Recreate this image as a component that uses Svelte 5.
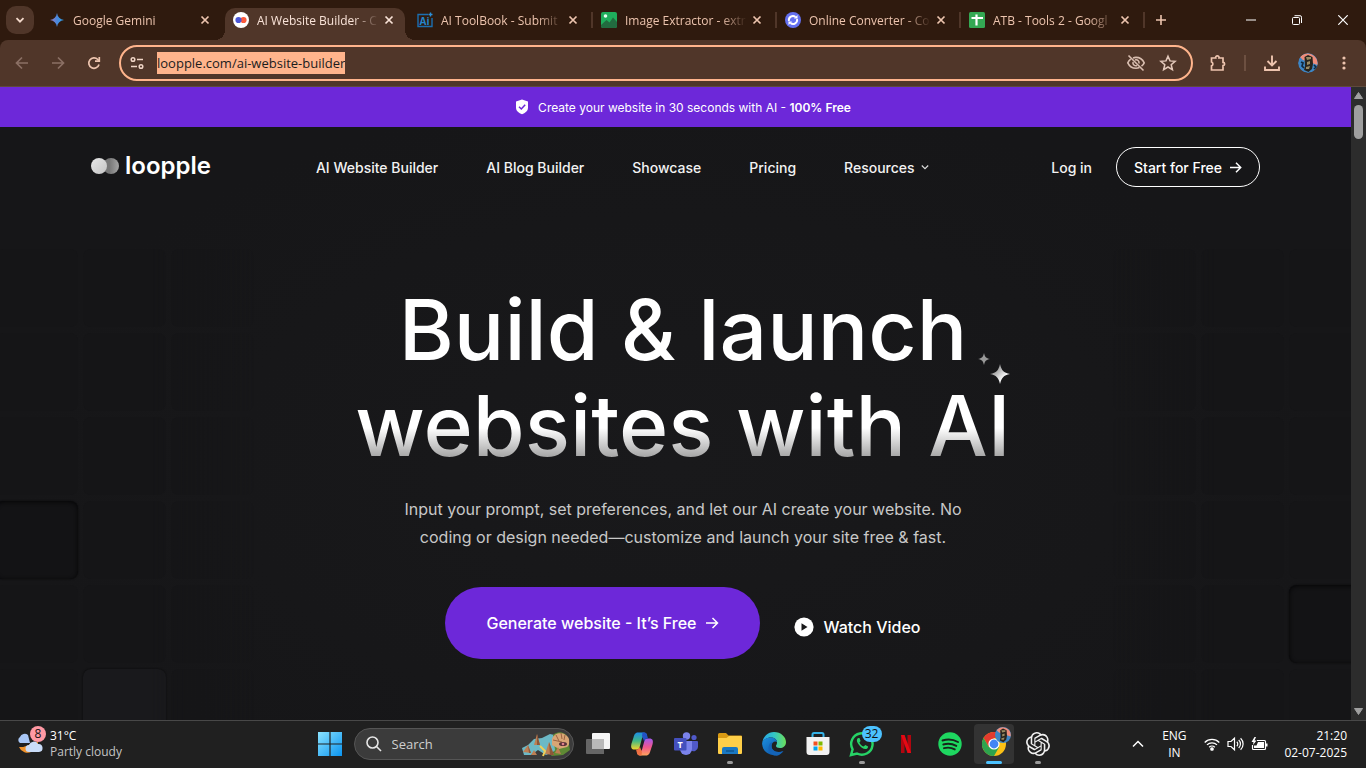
<script>
    const tabs = [
        { title: 'Google Gemini', icon: 'gemini' },
        { title: 'AI Website Builder - C', icon: 'loopple', active: true },
        { title: 'AI ToolBook - Submit', icon: 'toolbook' },
        { title: 'Image Extractor - extr', icon: 'image' },
        { title: 'Online Converter - Co', icon: 'converter' },
        { title: 'ATB - Tools 2 - Googl', icon: 'sheets' }
    ]

    const links = ['AI Website Builder', 'AI Blog Builder', 'Showcase', 'Pricing']

    const apps = [
        { name: 'Task View' },
        { name: 'Copilot' },
        { name: 'Teams' },
        { name: 'File Explorer', running: true },
        { name: 'Edge' },
        { name: 'Store' },
        { name: 'WhatsApp', running: true, badge: 32 },
        { name: 'Netflix' },
        { name: 'Spotify' },
        { name: 'Chrome', running: true, focused: true },
        { name: 'ChatGPT', running: true }
    ]

    // background tiles, six rows of three on each side
    const tiles = Array.from({ length: 18 }, (_, i) => i)

    let url = 'loopple.com/ai-website-builder'
    let query = ''
</script>

<div class="desktop">
    <header class="tabStrip">
        <button class="tabSearch" aria-label="Search tabs">
            <svg width="10" height="10" viewBox="0 0 10 10"><path d="M1.5 3.2 5 6.7l3.5-3.5" fill="none" stroke="#f3d9cb" stroke-width="1.8" /></svg>
        </button>

        <div class="tabs">
            {#each tabs as tab}
                <div class="tab" class:active={tab.active}>
                    <svg class="favicon" width="16" height="16" viewBox="0 0 16 16">
                        {#if tab.icon === 'gemini'}
                            <defs>
                                <linearGradient id="gem" x1="0" x2="1"><stop offset="0.1" stop-color="#8f7cc4" /><stop offset="0.5" stop-color="#4a87dc" /><stop offset="1" stop-color="#2aa3e8" /></linearGradient>
                            </defs>
                            <path d="M8 1c.6 4 3 6.400 7 7-4 .6-6.400 3-7 7-.6-4-3-6.400-7-7 4-.6 6.400-3 7-7z" fill="url(#gem)" />
                        {:else if tab.icon === 'loopple'}
                            <circle cx="8" cy="8" r="8" fill="#fff" />
                            <circle cx="10.500" cy="8" r="3.100" fill="#fb5a3c" />
                            <circle cx="5.500" cy="8" r="3.100" fill="#4b57d6" />
                        {:else if tab.icon === 'toolbook'}
                            <path d="M11 2.500H1v12h14V6" fill="none" stroke="#1c6fb0" stroke-width="1.400" />
                            <path d="M13.500.5v4M11.500 2.500h4" stroke="#2a8fd8" stroke-width="1.400" />
                            <text x="2.500" y="12.500" font-size="10" font-weight="700" fill="#2585ca">Ai</text>
                        {:else if tab.icon === 'image'}
                            <rect width="16" height="16" rx="2" fill="#1fae5c" />
                            <path d="M0 13l5.500-5 3 2.500L12 5.500l4 4.500v4a2 2 0 0 1-2 2H2a2 2 0 0 1-2-2z" fill="#226b3f" />
                            <circle cx="4.500" cy="4" r="1.800" fill="#e8fff0" />
                        {:else if tab.icon === 'converter'}
                            <circle cx="8" cy="8" r="8" fill="#6470f0" />
                            <path d="M4 9a4 4 0 0 1 6.500-4M12 7a4 4 0 0 1-6.500 4" fill="none" stroke="#fff" stroke-width="1.900" />
                            <path d="M9 6.500h3.500V3zM7 9.500H3.500V13z" fill="#fff" />
                        {:else}
                            <rect width="16" height="16" rx="1.500" fill="#34a853" />
                            <path d="M7.500 2.500v11M2.500 6h11.500" stroke="#fff" stroke-width="2.200" />
                        {/if}
                    </svg>
                    <span class="tabTitle">{tab.title}</span>
                    <button class="closeTab" aria-label="Close tab">
                        <svg width="10" height="10" viewBox="0 0 10 10"><path d="M1.500 1.500l7 7M8.500 1.500l-7 7" stroke="currentColor" stroke-width="1.700" /></svg>
                    </button>
                </div>
            {/each}
        </div>

        <button class="newTab" aria-label="New tab">
            <svg width="12" height="12" viewBox="0 0 12 12"><path d="M6 1v10M1 6h10" stroke="#edc4ae" stroke-width="1.600" /></svg>
        </button>

        <div class="windowButtons">
            <button aria-label="Minimize"><svg width="10" height="10" viewBox="0 0 10 10"><path d="M0 5h10" stroke="#fff" /></svg></button>
            <button aria-label="Restore"><svg width="10" height="10" viewBox="0 0 10 10" fill="none" stroke="#fff"><rect x=".5" y="2.500" width="7" height="7" rx="1" /><path d="M2.500.7H8A1.500 1.500 0 0 1 9.500 2.200V8" /></svg></button>
            <button aria-label="Close"><svg width="10" height="10" viewBox="0 0 10 10"><path d="M.3.3l9.400 9.400M9.700.3.3 9.700" stroke="#fff" stroke-width="1.200" /></svg></button>
        </div>
    </header>

    <div class="toolbarBack">
        <div class="toolbar">
            <button class="tool dim" aria-label="Back"><svg width="16" height="16" viewBox="0 0 16 16"><path d="M14 8H3M8 2.500 2.500 8 8 13.500" /></svg></button>
            <button class="tool dim" aria-label="Forward"><svg width="16" height="16" viewBox="0 0 16 16"><path d="M2 8h11M8 2.500 13.500 8 8 13.500" /></svg></button>
            <button class="tool" aria-label="Reload"><svg width="16" height="16" viewBox="0 0 16 16"><path d="M13 9.500A5.200 5.200 0 1 1 11.800 4.500L13 5.700" /><path d="M13.300 2v4.200H9" /></svg></button>

            <div class="omnibox">
                <svg width="16" height="16" viewBox="0 0 16 16" fill="none" stroke="#f0d5c6" stroke-width="1.500"><circle cx="4" cy="4.500" r="1.800" /><path d="M8 4.500h6M2 11.500h6" /><circle cx="12" cy="11.500" r="1.800" /></svg>
                <input class="url" type="text" aria-label="Address" bind:value={url} />
                <div class="omniboxIcons">
                    <button aria-label="Third-party cookies blocked">
                        <svg width="20" height="20" viewBox="0 0 20 20" fill="none" stroke="#d9beb0" stroke-width="1.600"><path d="M7 4.900A8.500 8.500 0 0 1 10 4.400c3.700 0 6.600 2 8.200 5.400a9.500 9.500 0 0 1-2.700 3.400M13.500 14.500a9 9 0 0 1-3.500.7c-3.700 0-6.600-2-8.200-5.400A9.500 9.500 0 0 1 4.700 6.200" /><path d="M9 6.900a3 3 0 0 1 3.900 3.700M11 12.600a3 3 0 0 1-3.900-3.700M2.500 2.500l15 15" /></svg>
                    </button>
                    <button aria-label="Bookmark">
                        <svg width="18" height="18" viewBox="0 0 18 18"><path d="M9 2.200l2 4.700 5.100.4-3.900 3.400 1.200 5L9 13l-4.400 2.700 1.200-5-3.900-3.400 5.100-.4z" fill="none" stroke="#e3c8ba" stroke-width="1.500" /></svg>
                    </button>
                </div>
            </div>

            <div class="extras">
                <button class="tool" aria-label="Extensions"><svg width="18" height="18" viewBox="0 0 18 18"><path d="M2.500 4h4.200a1.700 1.700 0 1 1 3.300 0H14v4.300a1.600 1.600 0 1 1 0 3.200V16H2.500v-4.200a2 2 0 0 0 0-3.800z" /></svg></button>
                <span class="divider"></span>
                <button class="tool" aria-label="Downloads"><svg width="18" height="18" viewBox="0 0 18 18"><path d="M9 1.500v9.500M4.500 7 9 11.500 13.500 7M2 12.500V16h14v-3.500" stroke-width="1.900" /></svg></button>
                <button class="tool" aria-label="Profile">
                    <svg class="avatar" width="20" height="20" viewBox="0 0 20 20">
                        <circle cx="10" cy="10" r="10" fill="#3d85c4" />
                        <path d="M2 4a10 10 0 0 1 17.500 8L14 10 5 7z" fill="#ef8d7b" />
                        <path d="M6.500 4 10 2l4.500 2 .5 7-1 5-3.500 3L6 17l1-4z" fill="#28241d" />
                        <path d="M3 9l2 1-1 3 2 2M16 12l2 2-2 2" stroke="#12283b" fill="none" />
                        <path d="M8 4h5v2l-4 1zM9 9l3-1v3l-3 1zM8 14l4-1-1 3H8z" fill="#9a8a62" />
                    </svg>
                </button>
                <button class="tool" aria-label="Menu"><svg width="16" height="16" viewBox="0 0 16 16"><g fill="#edc4ae" stroke="none"><circle cx="8" cy="3" r="1.600" /><circle cx="8" cy="8" r="1.600" /><circle cx="8" cy="13" r="1.600" /></g></svg></button>
            </div>
        </div>
    </div>

    <div class="viewport">
        <main class="page">
            <div class="tileField left" aria-hidden="true">
                {#each tiles as tile}
                    <div class="tile" class:sunken={tile === 9} class:raised={tile === 16}></div>
                {/each}
            </div>
            <div class="tileField right" aria-hidden="true">
                {#each tiles as tile}
                    <div class="tile" class:sunken={tile === 14}></div>
                {/each}
            </div>

            <div class="banner">
                <svg width="14" height="16" viewBox="0 0 14 16"><path d="M7 .5 13 2.500v6c0 3.500-3 5.700-6 6.800-3-1.100-6-3.300-6-6.800v-6z" fill="#fff" /><path d="M4 7.800 6.300 10 10.200 5.700" fill="none" stroke="#6d28d9" stroke-width="1.500" /></svg>
                <p>Create your website in 30 seconds with AI - <strong>100% Free</strong></p>
            </div>

            <nav class="siteNav">
                <a class="logo" href="#home">
                    <svg width="29" height="18" viewBox="0 0 29 18">
                        <defs>
                            <linearGradient id="logoBack"><stop offset="0.400" stop-color="#777" /><stop offset="1" stop-color="#a5a5a5" /></linearGradient>
                            <linearGradient id="logoFront" x1="0" y1="0" x2="1" y2="1"><stop offset="0" stop-color="#e8e8e8" /><stop offset="1" stop-color="#c4c4c4" /></linearGradient>
                        </defs>
                        <circle cx="20" cy="9" r="8" fill="url(#logoBack)" />
                        <circle cx="8" cy="9" r="8" fill="url(#logoFront)" />
                    </svg>
                    <span>loopple</span>
                </a>
                <div class="menu">
                    {#each links as link}
                        <a href="#top">{link}</a>
                    {/each}
                    <a href="#resources">
                        Resources
                        <svg width="8" height="8" viewBox="0 0 8 8"><path d="M.8 2.500 4 5.700 7.200 2.500" fill="none" stroke="#ddd" stroke-width="1.100" /></svg>
                    </a>
                </div>
                <div class="account">
                    <a href="#login">Log in</a>
                    <button class="startBtn">
                        Start for Free
                        <svg width="13" height="13" viewBox="0 0 13 13"><path d="M1 6.500h10.500M7 1.800l4.700 4.700L7 11.200" fill="none" stroke="#fff" stroke-width="1.500" /></svg>
                    </button>
                </div>
            </nav>

            <section class="hero">
                <div class="headline">
                    <h1>Build &amp; launch<br />websites with AI</h1>
                    <svg class="sparkles" width="34" height="34" viewBox="0 0 34 34">
                        <defs>
                            <linearGradient id="sparkle" x2="1" y2="1"><stop offset="0.200" stop-color="#888" /><stop offset="0.700" stop-color="#fff" /></linearGradient>
                        </defs>
                        <path d="M23 12c1.500 6.500 3.500 8.500 10 10-6.500 1.500-8.500 3.500-10 10-1.500-6.500-3.500-8.500-10-10 6.500-1.500 8.500-3.500 10-10z" fill="url(#sparkle)" />
                        <path d="M7 1c.9 4 2 5.100 6 6-4 .9-5.100 2-6 6-.9-4-2-5.100-6-6 4-.9 5.100-2 6-6z" fill="#999" />
                    </svg>
                </div>
                <p class="lead">Input your prompt, set preferences, and let our AI create your website. No<br />coding or design needed—customize and launch your site free &amp; fast.</p>
                <div class="actions">
                    <button class="generateBtn">
                        Generate website - It’s Free
                        <svg width="14" height="14" viewBox="0 0 14 14"><path d="M1 7h11.500M7.500 2l5 5-5 5" fill="none" stroke="#fff" stroke-width="1.500" /></svg>
                    </button>
                    <button class="watchBtn">
                        <svg width="20" height="20" viewBox="0 0 20 20"><circle cx="10" cy="10" r="9.600" fill="#fff" /><path d="M7.500 6.300v7.400l6-3.700z" fill="#18181a" /></svg>
                        Watch Video
                    </button>
                </div>
            </section>
        </main>

        <div class="scrollbar" aria-hidden="true">
            <svg width="9" height="7" viewBox="0 0 9 7"><path d="M4.500.5 8.500 6.500h-8z" fill="#a0a0a0" stroke="#a0a0a0" stroke-linejoin="round" /></svg>
            <div class="thumb"></div>
            <svg class="down" width="9" height="7" viewBox="0 0 9 7"><path d="M4.500 6.500.5.5h8z" fill="#a0a0a0" stroke="#a0a0a0" stroke-linejoin="round" /></svg>
        </div>
    </div>

    <footer class="taskbar">
        <button class="weather">
            <span class="weatherIcon">
                <svg width="28" height="28" viewBox="0 0 28 28">
                    <path d="M3 17a9 9 0 0 0 13 4.500A10 10 0 0 0 22 12c-7 0-11 6-19 5z" fill="#f0922b" />
                    <path d="M4 13a3.500 3.500 0 0 1 0-6A5 5 0 0 1 12 5l2 8z" fill="#a8c6f5" />
                    <path d="M13 22a3.500 3.500 0 0 1 0-7 5 5 0 0 1 9-1 4 4 0 0 1 1 8z" fill="#c9dcf8" />
                </svg>
                <span class="alert">8</span>
            </span>
            <span class="weatherText"><span>31°C</span><small>Partly cloudy</small></span>
        </button>

        <div class="dock">
            <button class="app" aria-label="Start">
                <svg width="24" height="24" viewBox="0 0 24 24">
                    <defs><linearGradient id="win" x2="1" y2="1"><stop offset="0" stop-color="#8be3ff" /><stop offset="1" stop-color="#0a94f0" /></linearGradient></defs>
                    <path d="M0 0h11.400v11.400H0zM12.600 0H24v11.400H12.600zM0 12.600h11.400V24H0zM12.600 12.600H24V24H12.600z" fill="url(#win)" />
                </svg>
            </button>
            <label class="search">
                <svg width="16" height="16" viewBox="0 0 16 16" fill="none" stroke="#e6e6e6" stroke-width="1.600"><circle cx="6.500" cy="6.500" r="5.500" /><path d="M10.500 10.500l4.500 4.500" /></svg>
                <input type="text" placeholder="Search" aria-label="Search" bind:value={query} />
                <svg class="art" width="50" height="26" viewBox="0 0 50 26">
                    <path d="M1 17l6-3 6-6 8-1 8-4 9 2-4 15-9 4-8-5-7 5H3z" fill="#6cb9c6" />
                    <path d="M32 4c5-5 13-3 15 3l2 12-7 5-12 1 4-6z" fill="#5f8a34" />
                    <path d="M31 8c3-8 14-7 17 0 0 3 1 6-2 8l-8 2-7-4z" fill="#d9a675" />
                    <path d="M35 4l3 6M40 2l1 6M44 4l-1 5M32 9l9 2" stroke="#9a6242" />
                    <path d="M2 21l5-7 3 8zM13 14l3-11 3 11zM24 23l4-12 5 13zM10 24l3-5 3 5zM34 22l3-6 3 7z" fill="#bd7f54" />
                    <path d="M16 3l3 11h-3zM28 11l5 13h-4zM7 14l3 8H8z" fill="#8c5739" />
                    <path d="M19 15l5 5-2 5" stroke="#f0cf57" stroke-width="2" fill="none" />
                    <ellipse cx="42" cy="13" rx="4" ry="2" fill="#59313a" />
                    <circle cx="42" cy="13" r="1.300" fill="#e1818b" />
                </svg>
            </label>

            {#each apps as app}
                <button class="app" class:running={app.running} class:focused={app.focused} aria-label={app.name}>
                    {#if app.name === 'Task View'}
                        <svg width="24" height="24" viewBox="0 0 24 24"><rect x="6" y="1" width="18" height="16" rx="1" fill="#f4f4f4" /><path d="M1 7h17v15H1a1 1 0 0 1-1-1V8a1 1 0 0 1 1-1z" fill="#666" /><path d="M6 7h12v10H6z" fill="#b9b9b9" /></svg>
                    {:else if app.name === 'Copilot'}
                        <svg width="24" height="24" viewBox="0 0 24 24">
                            <defs>
                                <linearGradient id="copA" x2="0" y2="1"><stop offset="0" stop-color="#1c8fe8" /><stop offset="0.500" stop-color="#42b883" /><stop offset="1" stop-color="#f5d52c" /></linearGradient>
                                <linearGradient id="copB" x2="0" y2="1"><stop offset="0" stop-color="#a259f0" /><stop offset="0.500" stop-color="#f0568e" /><stop offset="1" stop-color="#ffa35c" /></linearGradient>
                            </defs>
                            <path d="M17 3c-.5-1.500-1.500-2.500-3-2.500H8C5 .5 4.200 3 3.500 5.500L1.500 11.500c-1 4 0 6 3 6H7c1.500 0 2.300-1 2.800-3l2-7.500c.6-2 1.500-3 3.200-3z" fill="url(#copA)" />
                            <path d="M7 21c.5 1.500 1.500 2.500 3 2.500h6c3 0 3.800-2.500 4.500-5l2-6c1-4 0-6-3-6H17c-1.500 0-2.300 1-2.800 3l-2 7.500c-.6 2-1.500 3-3.200 3z" fill="url(#copB)" />
                            <path d="M12.500.5H14c2 0 2.700 1 3.200 3l.8 3h-1c-1.500 0-2.300 1-2.800 3L12 4z" fill="#2251c5" />
                            <path d="M11.500 23.500H10c-2 0-2.700-1-3.200-3l-.8-3h1c1.500 0 2.300-1 2.800-3L12 20z" fill="#ef7043" />
                        </svg>
                    {:else if app.name === 'Teams'}
                        <svg width="24" height="24" viewBox="0 0 24 24">
                            <circle cx="12.500" cy="4" r="3.700" fill="#7b83eb" /><circle cx="20" cy="5.500" r="2.600" fill="#5059c9" />
                            <path d="M17 9h6a1 1 0 0 1 1 1v5a4.500 4.500 0 0 1-7 3.500z" fill="#5059c9" />
                            <path d="M7 9h11v8a6 6 0 0 1-12 0z" fill="#7b83eb" />
                            <rect y="6" width="12.500" height="12.500" rx="1" fill="#4450bd" />
                            <text x="6.200" y="15.500" text-anchor="middle" font-size="9" font-weight="700" fill="#fff">T</text>
                        </svg>
                    {:else if app.name === 'File Explorer'}
                        <svg width="26" height="24" viewBox="0 0 26 24"><path d="M1 2.500A1.500 1.500 0 0 1 2.500 1H9l2.500 2.500H24a1 1 0 0 1 1 1V8H1z" fill="#d99a13" /><path d="M1 6h8.500L12 4h12a1 1 0 0 1 1 1v16a1 1 0 0 1-1 1H2a1 1 0 0 1-1-1z" fill="#ffcf48" /><path d="M5 22v-5a2 2 0 0 1 2-2h12a2 2 0 0 1 2 2v5z" fill="#1a78c2" /><path d="M9 19h8" stroke="#0f568f" stroke-width="1.500" /></svg>
                    {:else if app.name === 'Edge'}
                        <svg width="24" height="24" viewBox="0 0 24 24">
                            <defs>
                                <linearGradient id="edgeTop" x2="1"><stop offset="0" stop-color="#27a5e8" /><stop offset="0.500" stop-color="#33c5c5" /><stop offset="1" stop-color="#6bdf5a" /></linearGradient>
                                <linearGradient id="edgeLow" x2="1" y2="1"><stop offset="0" stop-color="#1c8fe0" /><stop offset="1" stop-color="#0b4b9c" /></linearGradient>
                            </defs>
                            <path d="M.2 11C1 4.500 6 0 12 0c7 0 12 5 12 10 0 4-3 6-6 6-2.500 0-4-1-4-2s1-1.500 1-3.500C15 7 12 5.500 9 5.500 4.500 5.500 1 8 .2 11z" fill="url(#edgeTop)" />
                            <path d="M.1 12C0 8.500 4 5.500 9 5.500c3 0 5.800 1.800 6 4.500-2-1.500-5.500 0-5.500 4 0 5 5.500 8 11.500 5A12 12 0 0 1 .1 12z" fill="url(#edgeLow)" />
                            <path d="M7.500 12c-3 6 1 12 7.500 11.700 3-.8 5-2.700 6.500-4.700-6 2.500-12 0-12-5 0-2 .8-3.400 2-4-2 0-3.500 1-4 2z" fill="#1464b8" />
                        </svg>
                    {:else if app.name === 'Store'}
                        <svg width="24" height="24" viewBox="0 0 24 24"><path d="M6.500 5V2.500A1.500 1.500 0 0 1 8 1h8a1.500 1.500 0 0 1 1.500 1.500V5" fill="none" stroke="#35b3e8" stroke-width="2" /><path d="M.5 5h23v15a3 3 0 0 1-3 3h-17a3 3 0 0 1-3-3z" fill="#f2f2f2" /><path d="M7.500 9.500h4v4h-4z" fill="#f25022" /><path d="M12.500 9.500h4v4h-4z" fill="#7fba00" /><path d="M7.500 14.500h4v4h-4z" fill="#00a4ef" /><path d="M12.500 14.500h4v4h-4z" fill="#ffb900" /></svg>
                    {:else if app.name === 'WhatsApp'}
                        <svg width="26" height="26" viewBox="0 0 26 26"><path d="M2 24l1.600-5.700A10.700 10.700 0 1 1 8 22.500z" fill="none" stroke="#26d366" stroke-width="2.400" /><path d="M9.500 7c-2 .8-2.300 3 0 6.200s5.200 5.300 7.600 4.800c1.400-.3 2-1.400 2-2.500L16.300 14l-1.600 1.600c-2-.7-3.600-2.300-4.300-4.200l1.200-1.500L10.500 7z" fill="#26d366" /></svg>
                    {:else if app.name === 'Netflix'}
                        <svg width="10" height="18" viewBox="0 0 10 18">
                            <rect width="3.500" height="18" fill="#b1060f" />
                            <rect x="6.500" width="3.500" height="18" fill="#b1060f" />
                            <rect width="3.500" height="18" transform="skewX(20)" fill="#e50914" />
                        </svg>
                    {:else if app.name === 'Spotify'}
                        <svg width="24" height="24" viewBox="0 0 24 24"><circle cx="12" cy="12" r="11.700" fill="#1ed760" /><path d="M4.500 8.500c5-1.500 11-1 15.500 1.500M5.300 12.500c4.500-1.300 9-.8 13 1.400M6 16.200c3.800-1 7.500-.6 10.800 1.200" fill="none" stroke="#17231b" stroke-width="1.900" stroke-linecap="round" /></svg>
                    {:else if app.name === 'Chrome'}
                        <svg width="24" height="24" viewBox="0 0 24 24"><circle cx="12" cy="12" r="12" fill="#fbc116" /><path d="M1.600 6A12 12 0 0 1 22.400 6H12L6.800 15z" fill="#e33b2e" /><path d="M1.600 6A12 12 0 0 0 12 24l5.200-9H6.800z" fill="#2da44e" /><circle cx="12" cy="12" r="5.600" fill="#fff" /><circle cx="12" cy="12" r="4.400" fill="#4285f4" /></svg>
                        <svg class="profile" width="16" height="16" viewBox="0 0 20 20"><circle cx="10" cy="10" r="10" fill="#3d85c4" /><path d="M2 4a10 10 0 0 1 17.500 8L14 10 5 7z" fill="#ef8d7b" /><path d="M6.500 4 10 2l4.500 2 .5 7-1 5-3.500 3L6 17l1-4z" fill="#28241d" /><path d="M8 4h5v2l-4 1zM9 9l3-1v3l-3 1zM8 14l4-1-1 3H8z" fill="#9a8a62" /></svg>
                    {:else}
                        <svg width="24" height="24" viewBox="0 0 24 24"><path fill="#f0f0f0" d="M22.2819 9.8211a5.9847 5.9847 0 0 0-.5157-4.9108 6.0462 6.0462 0 0 0-6.5098-2.9A6.0651 6.0651 0 0 0 4.9807 4.1818a5.9847 5.9847 0 0 0-3.9977 2.9 6.0462 6.0462 0 0 0 .7427 7.0966 5.98 5.98 0 0 0 .511 4.9107 6.051 6.051 0 0 0 6.5146 2.9001A5.9847 5.9847 0 0 0 13.2599 24a6.0557 6.0557 0 0 0 5.7718-4.2058 5.9894 5.9894 0 0 0 3.9977-2.9001 6.0557 6.0557 0 0 0-.7475-7.0729zm-9.022 12.6081a4.4755 4.4755 0 0 1-2.8764-1.0408l.1419-.0804 4.7783-2.7582a.7948.7948 0 0 0 .3927-.6813v-6.7369l2.02 1.1686a.071.071 0 0 1 .038.052v5.5826a4.504 4.504 0 0 1-4.4945 4.4944zm-9.6607-4.1254a4.4708 4.4708 0 0 1-.5346-3.0137l.142.0852 4.783 2.7582a.7712.7712 0 0 0 .7806 0l5.8428-3.3685v2.3324a.0804.0804 0 0 1-.0332.0615L9.74 19.9502a4.4992 4.4992 0 0 1-6.1408-1.6464zM2.3408 7.8956a4.485 4.485 0 0 1 2.3655-1.9728V11.6a.7664.7664 0 0 0 .3879.6765l5.8144 3.3543-2.0201 1.1685a.0757.0757 0 0 1-.071 0l-4.8303-2.7865A4.504 4.504 0 0 1 2.3408 7.872zm16.5963 3.8558L13.1038 8.364 15.1192 7.2a.0757.0757 0 0 1 .071 0l4.8303 2.7913a4.4944 4.4944 0 0 1-.6765 8.1042v-5.6772a.79.79 0 0 0-.407-.667zm2.0107-3.0231l-.142-.0852-4.7735-2.7818a.7759.7759 0 0 0-.7854 0L9.409 9.2297V6.8974a.0662.0662 0 0 1 .0284-.0615l4.8303-2.7866a4.4992 4.4992 0 0 1 6.6802 4.66zM8.3065 12.863l-2.02-1.1638a.0804.0804 0 0 1-.038-.0567V6.0742a4.4992 4.4992 0 0 1 7.3757-3.4537l-.142.0805L8.704 5.459a.7948.7948 0 0 0-.3927.6813zm1.0976-2.3654l2.602-1.4998 2.6069 1.4998v2.9994l-2.5974 1.4997-2.6067-1.4997Z" /></svg>
                    {/if}
                    {#if app.badge}
                        <span class="badge">{app.badge}</span>
                    {/if}
                </button>
            {/each}
        </div>

        <div class="tray">
            <button aria-label="Show hidden icons"><svg width="12" height="12" viewBox="0 0 12 12"><path d="M1 8.500 6 3.500l5 5" fill="none" stroke="#fff" stroke-width="1.500" /></svg></button>
            <button class="language">ENG<br />IN</button>
            <button class="status" aria-label="Network, volume and battery">
                <svg width="16" height="16" viewBox="0 0 16 16" fill="none" stroke="#fff" stroke-width="1.300"><path d="M.7 6.500a10.300 10.300 0 0 1 14.600 0M3 8.900a7 7 0 0 1 10 0M5.200 11.200a4 4 0 0 1 5.600 0" /><circle cx="8" cy="13" r="1.200" fill="#fff" /></svg>
                <svg width="17" height="16" viewBox="0 0 17 16" fill="none" stroke="#fff" stroke-width="1.200"><path d="M1 5.500h3l3.500-3.300v11.600L4 10.500H1zM9.800 5.800a3 3 0 0 1 0 4.400M11.700 4a5.500 5.500 0 0 1 0 8M13.600 2.200a8 8 0 0 1 0 11.600" /></svg>
                <svg width="17" height="16" viewBox="0 0 17 16"><path d="M6 4.500h7.500a1 1 0 0 1 1 1v7a1 1 0 0 1-1 1h-11a1 1 0 0 1-1-1V9" fill="none" stroke="#fff" stroke-width="1.200" /><path d="M7 6h6v6H3V9.500h2.500zM15 7.500h1.500v3H15zM3.500 1 .5 6h2L2 9l3.500-4.500h-2L5 1z" fill="#fff" /></svg>
            </button>
            <button class="clock">21:20<br />02-07-2025</button>
        </div>
    </footer>
</div>

<style>
    :global(body) {
        margin: 0;
        background-color: #17171a;
    }

    .desktop {
        display: flex;
        flex-direction: column;
        min-height: 100vh;
        font-family: 'Open Sans', 'Noto Sans', sans-serif;
        font-size: 12px;
        color: #fff;
    }

    button {
        display: flex;
        align-items: center;
        justify-content: center;
        margin: 0px;
        padding: 0px;
        border: none;
        background-color: transparent;
        font-family: inherit;
        font-size: inherit;
        color: inherit;
    }

    input {
        border: none;
        outline: none;
        padding: 0px;
        font-family: inherit;
    }

    a {
        color: inherit;
        text-decoration: none;
    }

    svg {
        display: block;
        flex: none;
    }

    /* tab strip */
    .tabStrip {
        display: flex;
        align-items: center;
        height: 40px;
        background-color: #2f1a0e;
        color: #edc4ae;
    }

    .tabSearch {
        width: 28px;
        height: 28px;
        margin: 0px 7px 0px 6px;
        border-radius: 10px;
        background-color: #503629;
    }

    .tabs {
        display: flex;
        align-self: stretch;
        flex: 0 1 1104px;
        min-width: 0;
    }

    .tab {
        position: relative;
        display: flex;
        align-items: center;
        flex: 1;
        min-width: 0;
        margin-top: 8px;
        padding: 0px 12px 8px 8px;
        box-sizing: border-box;
    }

    .tab:nth-child(n + 3)::after {
        content: '';
        position: absolute;
        right: 0px;
        top: 4px;
        width: 2px;
        height: 16px;
        background-color: #503629;
    }

    .tab.active {
        margin-right: 4px;
        padding-right: 8px;
        border-radius: 10px 10px 0px 0px;
        background-color: #503629;
        color: #f9e3d8;
    }

    .tab.active::before,
    .tab.active::after {
        content: '';
        position: absolute;
        bottom: 0px;
        width: 10px;
        height: 10px;
    }

    .tab.active::before {
        left: -10px;
        background: radial-gradient(circle at 0 0, transparent 10px, #503629 10px);
    }

    .tab.active::after {
        right: -10px;
        background: radial-gradient(circle at 100% 0, transparent 10px, #503629 10px);
    }

    .tabTitle {
        flex: 1;
        min-width: 0;
        margin: 0px 0px 0px 8px;
        overflow: hidden;
        white-space: nowrap;
        mask-image: linear-gradient(to right, #000 calc(100% - 28px), transparent calc(100% - 2px));
    }

    .closeTab {
        width: 16px;
        height: 16px;
    }

    .newTab {
        width: 28px;
        height: 28px;
        margin-left: 2px;
    }

    .windowButtons {
        display: flex;
        margin-left: auto;
    }

    .windowButtons button {
        width: 46px;
        height: 40px;
    }

    /* toolbar */
    .toolbarBack {
        background-color: #2f1a0e;
    }

    .toolbar {
        display: flex;
        align-items: center;
        height: 46px;
        padding-left: 4px;
        border-bottom: 1px solid #5f4a3c;
        border-radius: 8px 8px 0px 0px;
        background-color: #503629;
    }

    .tool {
        width: 36px;
        height: 36px;
    }

    .tool svg {
        fill: none;
        stroke: #edc4ae;
        stroke-width: 1.7;
    }

    .tool .avatar {
        stroke: none;
        border-radius: 50%;
    }

    .dim svg {
        stroke: #8b7064;
    }

    .omnibox {
        display: flex;
        align-items: center;
        flex: 1;
        min-width: 0;
        gap: 12px;
        height: 36px;
        margin-left: 7px;
        padding: 0px 14px 0px 8px;
        border: 2px solid #ffb48c;
        border-radius: 18px;
        box-sizing: border-box;
    }

    .url {
        field-sizing: content;
        height: 22px;
        background-color: #ffb48c;
        color: #1c1c1c;
        font-size: 13px;
    }

    .omniboxIcons {
        display: flex;
        gap: 13px;
        margin-left: auto;
    }

    .extras {
        display: flex;
        align-items: center;
        padding: 0px 4px 0px 7px;
    }

    .divider {
        width: 2px;
        height: 16px;
        margin: 0px 8px;
        background-color: #6d5041;
    }

    /* page */
    .viewport {
        display: flex;
        flex: 1;
    }

    .page {
        position: relative;
        flex: 1;
        min-width: 0;
        overflow: hidden;
        background: radial-gradient(ellipse at 50% 60%, #19191b, #161618 70%);
        font-family: Inter, 'Open Sans', sans-serif;
    }

    .tileField {
        position: absolute;
        top: 162px;
        display: grid;
        grid-template-columns: repeat(3, 83px);
        grid-auto-rows: 78px;
        gap: 6px 5px;
        mask-image: linear-gradient(to right, #000 60%, transparent);
    }

    .tileField.left {
        left: -5px;
    }

    .tileField.right {
        right: -21px;
        mask-image: linear-gradient(to left, #000 60%, transparent);
    }

    .tile {
        border-radius: 8px;
        background-color: #151517;
    }

    .tile.sunken {
        background-color: #131315;
        box-shadow: inset 0px 1px 4px #050506, 0px 0px 2px #08080a;
    }

    .tile.raised {
        background-color: #19191c;
        box-shadow: 0px 0px 2px #060608;
    }

    .banner {
        position: relative;
        display: flex;
        align-items: center;
        justify-content: center;
        gap: 9px;
        height: 40px;
        padding-left: 15px;
        background-color: #6d28d9;
        font-size: 12px;
    }

    .banner p {
        margin: 0px;
    }

    .banner strong {
        font-weight: 600;
    }

    .siteNav {
        position: relative;
        display: flex;
        align-items: center;
        max-width: 1169px;
        margin: 0px auto;
        padding: 20px 0px;
        font-size: 14px;
        font-weight: 500;
        color: #f2f2f2;
    }

    .logo {
        display: flex;
        align-items: center;
        gap: 5px;
        font-size: 24px;
        font-weight: 600;
        line-height: 32px;
        padding-bottom: 3px;
        color: #fff;
    }

    .menu {
        display: flex;
        gap: 48px;
        margin-left: 105px;
    }

    .menu a {
        display: flex;
        align-items: center;
        gap: 6px;
    }

    .account {
        display: flex;
        align-items: center;
        gap: 24px;
        margin-left: auto;
    }

    .startBtn {
        gap: 7px;
        height: 40px;
        padding: 0px 17px;
        border: 1px solid #fff;
        border-radius: 20px;
        font-weight: 500;
        color: #fff;
    }

    .hero {
        position: relative;
        display: flex;
        flex-direction: column;
        align-items: center;
        padding: 75px 0px 60px 15px;
        text-align: center;
    }

    .headline {
        position: relative;
    }

    h1 {
        margin: 0px;
        font-size: 84px;
        font-weight: 500;
        line-height: 96px;
        background: linear-gradient(to bottom, #fff 76%, #a0a0a0 92%);
        background-clip: text;
        color: transparent;
    }

    .sparkles {
        position: absolute;
        right: 0px;
        top: 70px;
    }

    .lead {
        margin: 21px 0px 36px;
        font-size: 16px;
        line-height: 28px;
        color: #c8c8c8;
    }

    .actions {
        display: flex;
        align-items: center;
        gap: 34px;
    }

    .generateBtn {
        gap: 8px;
        height: 72px;
        padding: 0px 41px;
        border-radius: 36px;
        background-color: #6d28d9;
        font-size: 16px;
        font-weight: 500;
    }

    .watchBtn {
        gap: 10px;
        padding-top: 8px;
        font-size: 16px;
        font-weight: 500;
    }

    .scrollbar {
        display: flex;
        flex-direction: column;
        align-items: center;
        width: 15px;
        padding: 5px 0px;
        box-sizing: border-box;
        background-color: #2c2c2c;
    }

    .thumb {
        width: 9px;
        height: 34px;
        margin-top: 6px;
        border-radius: 5px;
        background-color: #9f9f9f;
    }

    .down {
        margin-top: auto;
    }

    /* taskbar */
    .taskbar {
        display: grid;
        grid-template-columns: 1fr auto 1fr;
        align-items: center;
        height: 45px;
        padding-bottom: 2px;
        border-top: 1px solid #484848;
        background-color: #202020;
    }

    .weather {
        justify-self: start;
        gap: 6px;
        padding-left: 16px;
    }

    .weatherIcon {
        position: relative;
    }

    .alert {
        position: absolute;
        top: -4px;
        right: -2px;
        width: 16px;
        height: 16px;
        border-radius: 50%;
        background-color: #ff99a4;
        color: #111;
        line-height: 16px;
        text-align: center;
    }

    .weatherText {
        display: flex;
        flex-direction: column;
        line-height: 16px;
        text-align: left;
    }

    .weatherText small {
        font-size: 12px;
        color: #c4c4c4;
    }

    .dock {
        display: flex;
        align-items: center;
        gap: 4px;
        padding-left: 1px;
    }

    .app {
        position: relative;
        width: 40px;
        height: 40px;
        border-radius: 4px;
    }

    .focused {
        background-color: #333;
    }

    .running::after {
        content: '';
        position: absolute;
        bottom: 0px;
        width: 6px;
        height: 3px;
        border-radius: 2px;
        background-color: #9a9a9a;
    }

    .focused::after {
        width: 16px;
        background-color: #4cc2ff;
    }

    .badge {
        position: absolute;
        top: 2px;
        right: 0px;
        width: 20px;
        height: 16px;
        border-radius: 8px;
        background-color: #4cc2ff;
        color: #111;
        line-height: 16px;
    }

    .profile {
        position: absolute;
        top: 3px;
        right: 3px;
    }

    .search {
        display: flex;
        align-items: center;
        gap: 10px;
        width: 220px;
        height: 32px;
        padding: 0px 2px 0px 11px;
        border: 1px solid #555;
        border-radius: 16px;
        box-sizing: border-box;
        background-color: #3b3b3b;
    }

    .search input {
        flex: 1;
        min-width: 0;
        background-color: transparent;
        font-size: 13px;
    }

    .search input::placeholder {
        color: #cfcfcf;
        opacity: 1;
    }

    .tray {
        display: flex;
        align-items: center;
        justify-self: end;
        padding-right: 19px;
        line-height: 16px;
    }

    .language {
        width: 60px;
    }

    .status {
        gap: 7px;
        margin-right: 16px;
    }

    .clock {
        text-align: right;
    }
</style>
